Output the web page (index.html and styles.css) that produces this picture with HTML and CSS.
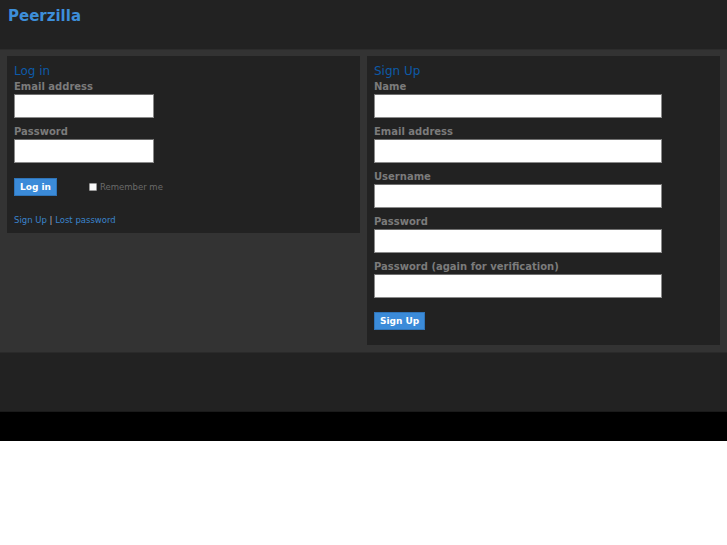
FILE: index.html
```html
<!DOCTYPE html>
<html>
<head>
<meta charset="utf-8">
<title>Peerzilla</title>
<link rel="stylesheet" href="styles.css">
</head>
<body>
<header class="top">
  <div class="brand">Peerzilla</div>
</header>
<main class="main">
  <section class="panel">
    <h2 class="panel-title">Log in</h2>
    <div class="field">
      <label class="label">Email address</label>
      <div class="input small"></div>
    </div>
    <div class="field">
      <label class="label">Password</label>
      <div class="input small"></div>
    </div>
    <div class="actions">
      <span class="btn">Log in</span>
      <span class="remember"><span class="check"></span>Remember me</span>
    </div>
    <div class="links"><a class="link">Sign Up</a> <span class="sep">|</span> <a class="link">Lost password</a></div>
  </section>
  <section class="panel">
    <h2 class="panel-title">Sign Up</h2>
    <div class="field">
      <label class="label">Name</label>
      <div class="input wide"></div>
    </div>
    <div class="field">
      <label class="label">Email address</label>
      <div class="input wide"></div>
    </div>
    <div class="field">
      <label class="label">Username</label>
      <div class="input wide"></div>
    </div>
    <div class="field">
      <label class="label">Password</label>
      <div class="input wide"></div>
    </div>
    <div class="field">
      <label class="label">Password (again for verification)</label>
      <div class="input wide"></div>
    </div>
    <div class="actions actions-signup">
      <span class="btn">Sign Up</span>
    </div>
  </section>
</main>
<footer class="footer"></footer>
<div class="bottom"></div>
</body>
</html>
```
FILE: styles.css
```css
* { box-sizing: border-box; }
html, body { margin: 0; padding: 0; background: #fff; }
body { font-family: "DejaVu Sans", Verdana, sans-serif; }

.top {
  height: 49px;
  background: #222222;
  padding: 6px 8px 0;
}
.brand {
  font-size: 15px;
  font-weight: bold;
  color: #3d8ed9;
  line-height: 20px;
}

.main {
  background: #333333;
  border-top: 1px solid #2c2c2c;
  padding: 6px 7px 7px;
  display: grid;
  grid-template-columns: 1fr 1fr;
  gap: 7px;
  align-items: start;
}
.panel {
  background: #222222;
  padding: 7px 7px 7px;
}
.panel-title {
  margin: 0;
  font-size: 12px;
  font-weight: normal;
  color: #0d5aa8;
  line-height: 17px;
}
.field { margin-bottom: 7px; }
.label {
  display: block;
  font-size: 10px;
  font-weight: bold;
  color: #7b7b7b;
  line-height: 13px;
}
.input {
  margin-top: 1px;
  height: 24px;
  background: #fff;
  border: 1px solid #8a8a8a;
  border-top-color: #6f6f6f;
}
.input.small { width: 140px; }
.input.wide { width: 288px; }

.actions {
  display: flex;
  align-items: center;
  margin-top: 15px;
}
.actions-signup {
  margin-top: 14px;
  margin-bottom: 8px;
}
.btn {
  display: inline-block;
  background: #3b8bd9;
  border: 1px solid #2f74b8;
  color: #fff;
  font-size: 9px;
  font-weight: bold;
  height: 18px;
  line-height: 16px;
  padding: 0 5px;
}
.remember {
  display: inline-flex;
  align-items: center;
  margin-left: 32px;
  font-size: 8.5px;
  color: #6a6a6a;
}
.check {
  width: 8px;
  height: 8px;
  background: #fafafa;
  border: 1px solid #9a9a9a;
  margin-right: 3px;
  border-radius: 1px;
}
.links {
  margin-top: 18px;
  font-size: 8.5px;
  line-height: 12px;
}
.link { color: #3a83cc; }
.sep { color: #bbbbbb; }

.footer {
  height: 60px;
  background: #222222;
  border-top: 1px solid #2a2a2a;
  border-bottom: 1px solid #1a1a1a;
}
.bottom {
  height: 29px;
  background: #000;
}
```
